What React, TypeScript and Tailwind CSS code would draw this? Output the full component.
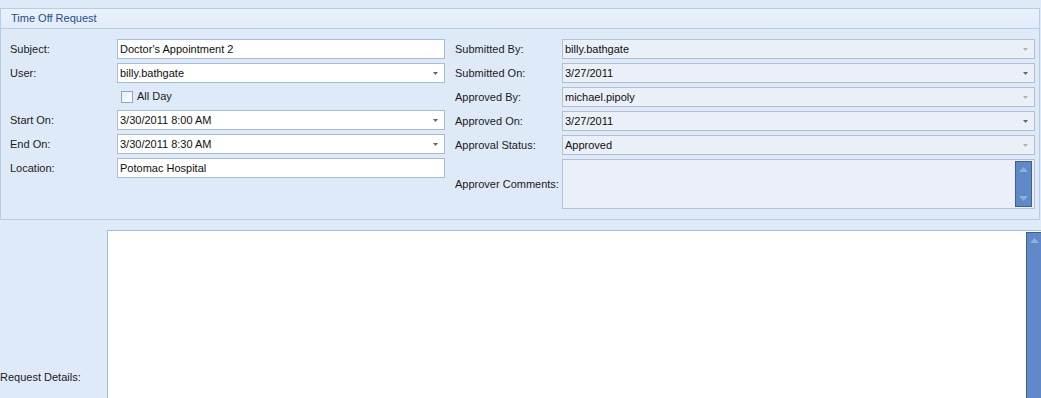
import React from "react";

const font = { fontFamily: '"Liberation Sans", Arial, sans-serif' };

function Arrow({ dim }: { dim?: boolean }) {
  return (
    <svg width="5" height="3" viewBox="0 0 5 3" className="shrink-0">
      <path d="M0 0h5L2.5 3z" fill={dim ? "#a9b3c2" : "#5b6779"} />
    </svg>
  );
}

function Field({
  value,
  combo,
  readOnly,
  dimArrow,
  className = "",
}: {
  value: string;
  combo?: boolean;
  readOnly?: boolean;
  dimArrow?: boolean;
  className?: string;
}) {
  return (
    <div
      className={`flex h-[20px] items-center border pl-[2px] pr-[6px] text-[11px] text-[#101010] ${
        readOnly ? "border-[#b1c0d6] bg-[#eaeff8]" : "border-[#a7bcd8] bg-white"
      } ${className}`}
    >
      <span className="flex-1 truncate">{value}</span>
      {combo && <Arrow dim={dimArrow} />}
    </div>
  );
}

function Row({ label, children, w }: { label: string; children: React.ReactNode; w: string }) {
  return (
    <div className="flex items-center">
      <div className={`${w} shrink-0 text-[11px] text-[#1b1b1b]`}>{label}</div>
      {children}
    </div>
  );
}

export default function App() {
  return (
    <div className="h-[398px] w-full overflow-hidden bg-[#dfeaf8] pt-[8px]" style={font}>
      {/* group box */}
      <div className="w-[1040px] border border-[#b9cce4] bg-[#dfeaf8]">
        <div className="flex h-[20px] items-center border-b border-[#b9cce4] bg-gradient-to-b from-[#eaf2fc] to-[#e1ebf8] pl-[10px] text-[11px] text-[#1f4d8c]">
          Time Off Request
        </div>
        <div className="flex pt-[10px] pb-[10px]">
          {/* left column */}
          <div className="flex w-[444px] flex-col gap-[4px] pl-[9px]">
            <Row label="Subject:" w="w-[107px]">
              <Field value="Doctor's Appointment 2" className="w-[328px]" />
            </Row>
            <Row label="User:" w="w-[107px]">
              <Field value="billy.bathgate" combo className="w-[328px]" />
            </Row>
            <div className="flex h-[19px] items-center pl-[111px] text-[11px] text-[#1b1b1b]">
              <span className="mr-[4px] h-[12px] w-[12px] border border-[#8da6c6] bg-gradient-to-br from-[#e6edf6] to-white" />
              All Day
            </div>
            <Row label="Start On:" w="w-[107px]">
              <Field value="3/30/2011 8:00 AM" combo className="w-[328px]" />
            </Row>
            <Row label="End On:" w="w-[107px]">
              <Field value="3/30/2011 8:30 AM" combo className="w-[328px]" />
            </Row>
            <Row label="Location:" w="w-[107px]">
              <Field value="Potomac Hospital" className="w-[328px]" />
            </Row>
          </div>
          {/* right column */}
          <div className="ml-[10px] flex flex-col gap-[4px]">
            <Row label="Submitted By:" w="w-[107px]">
              <Field value="billy.bathgate" combo readOnly dimArrow className="w-[473px]" />
            </Row>
            <Row label="Submitted On:" w="w-[107px]">
              <Field value="3/27/2011" combo readOnly className="w-[473px]" />
            </Row>
            <Row label="Approved By:" w="w-[107px]">
              <Field value="michael.pipoly" combo readOnly dimArrow className="w-[473px]" />
            </Row>
            <Row label="Approved On:" w="w-[107px]">
              <Field value="3/27/2011" combo readOnly className="w-[473px]" />
            </Row>
            <Row label="Approval Status:" w="w-[107px]">
              <Field value="Approved" combo readOnly dimArrow className="w-[473px]" />
            </Row>
            <Row label="Approver Comments:" w="w-[107px]">
              <div className="flex h-[50px] w-[473px] justify-end border border-[#b1c0d6] bg-[#eaeff8] p-[1px] pr-[2px]">
                <div className="flex w-[17px] flex-col items-center justify-between border border-[#3f5f8f] bg-[#5f89c7] py-[5px]">
                  <svg width="9" height="5" viewBox="0 0 9 5">
                    <path d="M0 5L4.5 0L9 5z" fill="#8eb0dc" />
                  </svg>
                  <svg width="9" height="5" viewBox="0 0 9 5">
                    <path d="M0 0h9L4.5 5z" fill="#8eb0dc" />
                  </svg>
                </div>
              </div>
            </Row>
          </div>
        </div>
      </div>

      {/* request details */}
      <div className="mt-[10px] flex h-[200px]">
        <div className="flex w-[107px] shrink-0 items-start pt-[139px] text-[11px] text-[#1b1b1b]">
          Request Details:
        </div>
        <div className="flex w-[936px] shrink-0 justify-end border border-[#a7bcd8] bg-white pt-[1px]">
          <div className="flex w-[16px] flex-col items-center border border-[#3f5f8f] bg-[#6089c8] pt-[5px]">
            <svg width="9" height="5" viewBox="0 0 9 5">
              <path d="M0 5L4.5 0L9 5z" fill="#8eb0dc" />
            </svg>
          </div>
        </div>
      </div>
    </div>
  );
}
